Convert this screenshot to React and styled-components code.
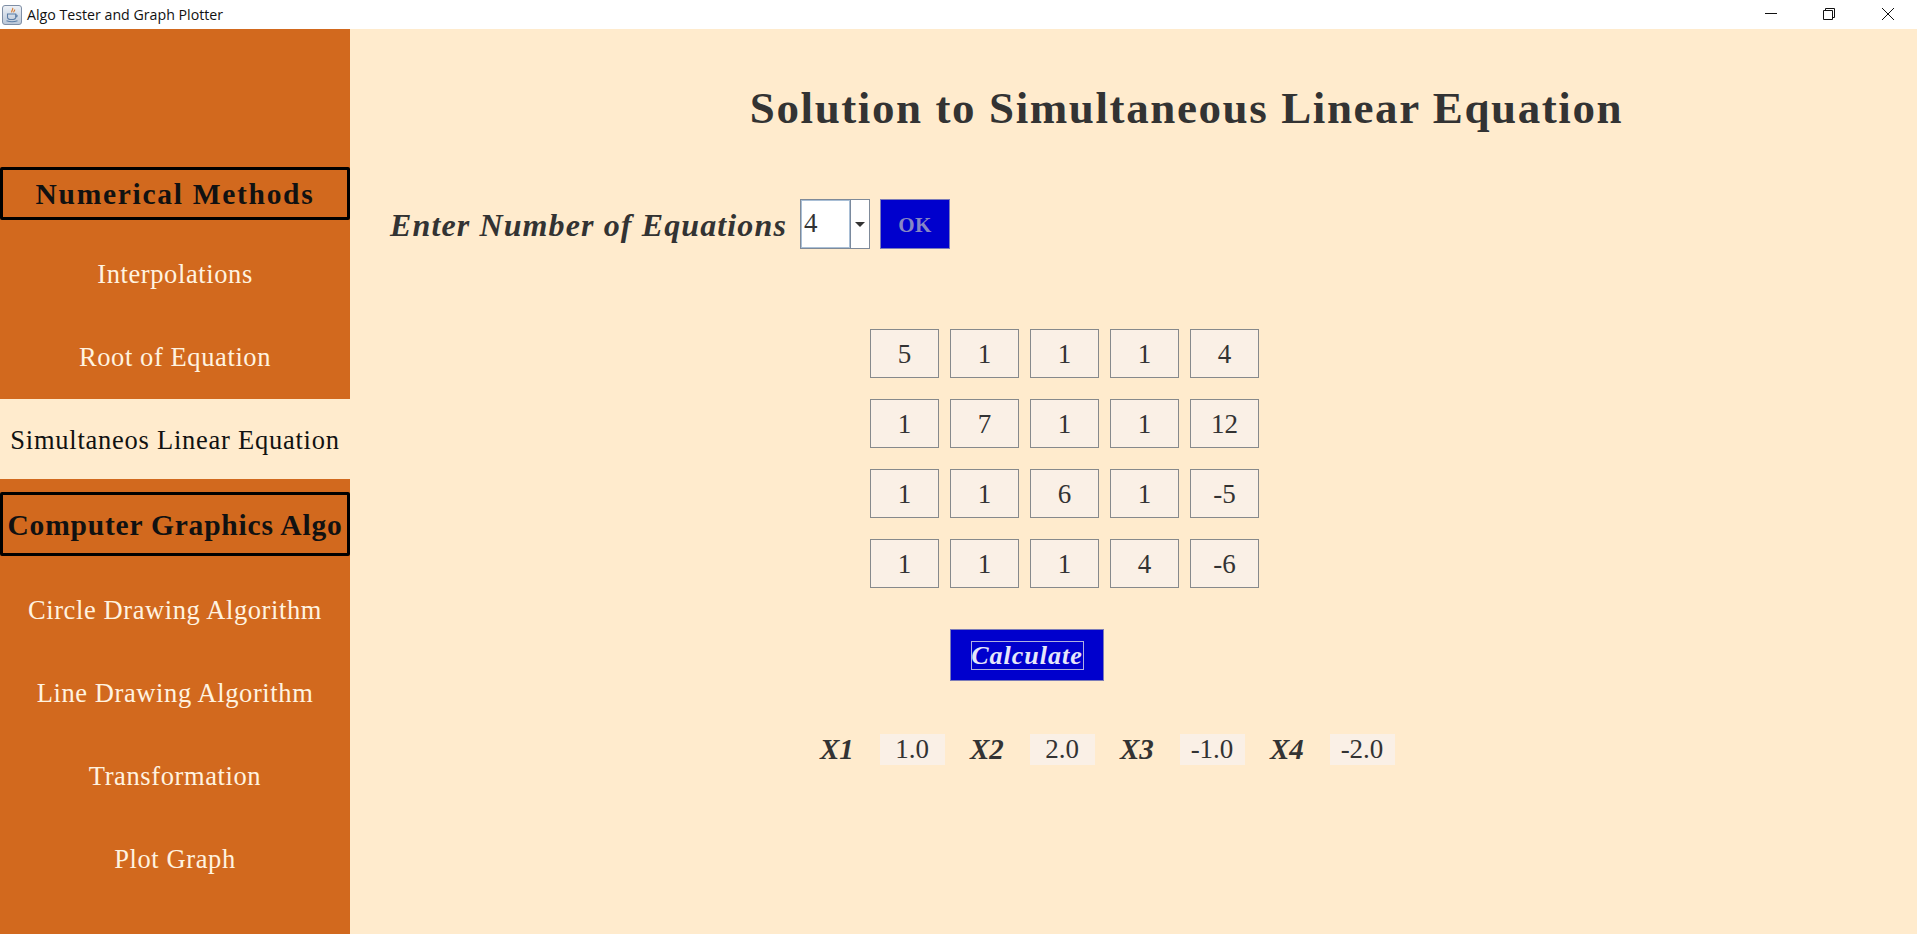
import React from 'react';
import styled, { createGlobalStyle } from 'styled-components';

const serif = `"Liberation Serif", "Times New Roman", serif`;

const GlobalStyle = createGlobalStyle`
  html, body {
    margin: 0;
    padding: 0;
    height: 100%;
    overflow: hidden;
    background: #FFEBCD;
  }
  * {
    box-sizing: border-box;
  }
`;

const Window = styled.div`
  width: 1917px;
  height: 934px;
  display: flex;
  flex-direction: column;
  overflow: hidden;
`;

const TitleBar = styled.div`
  height: 29px;
  flex: none;
  background: #fff;
  display: flex;
  align-items: center;
  padding-left: 2px;
`;

const AppName = styled.span`
  margin-left: 5px;
  font: 14.2px "Open Sans", "Noto Sans", sans-serif;
  color: #111;
  white-space: nowrap;
`;

const WindowButtons = styled.div`
  margin-left: auto;
  display: flex;
  height: 100%;
  margin-right: 22px;
  gap: 46px;
  align-items: flex-start;
  padding-top: 7px;
`;

const Body = styled.div`
  flex: 1;
  display: flex;
  min-height: 0;
`;

const Sidebar = styled.nav`
  width: 350px;
  flex: none;
  background: #D2691E;
  padding-top: 138px;
  display: flex;
  flex-direction: column;
`;

const SectionHead = styled.div`
  height: ${p => p.$height}px;
  margin-bottom: ${p => p.$after}px;
  padding-top: 2px;
  border: 3px solid #000;
  border-radius: 2px;
  display: flex;
  align-items: center;
  justify-content: center;
  font: bold 29.5px ${serif};
  letter-spacing: ${p => p.$spacing}px;
  color: #111;
  white-space: nowrap;
`;

const NavItem = styled.div`
  height: ${p => (p.$active ? 80 : 83)}px;
  margin-bottom: ${p => (p.$active ? 13 : 0)}px;
  padding-bottom: ${p => p.$lift || 0}px;
  padding-top: ${p => (p.$active ? 2 : 1)}px;
  display: flex;
  align-items: center;
  justify-content: center;
  font: 26.5px ${serif};
  letter-spacing: ${p => (p.$active ? 0.75 : 0.6)}px;
  white-space: nowrap;
  background: ${p => (p.$active ? '#FFEBCD' : 'transparent')};
  color: ${p => (p.$active ? '#111' : '#FFF3E0')};
`;

const Main = styled.main`
  flex: 1;
  padding-top: 54px;
  color: #333;
  font-family: ${serif};
`;

const Title = styled.h1`
  margin: 0 0 0 399px;
  width: 875px;
  height: 50px;
  text-align: center;
  font: bold 45px/50px ${serif};
  letter-spacing: 1.6px;
  color: #333;
  white-space: nowrap;
`;

const EquationRow = styled.div`
  margin: 66px 0 0 40px;
  display: flex;
  height: 50px;
`;

const RowLabel = styled.label`
  width: 410px;
  font: italic bold 32px/52px ${serif};
  letter-spacing: 1.12px;
  white-space: nowrap;
`;

const Combo = styled.div`
  width: 70px;
  height: 50px;
  display: flex;
  background: #fff;
  border: 1px solid #7f8a99;
`;

const ComboValue = styled.div`
  width: 50px;
  border-right: 1px solid #7a8a9e;
  box-shadow: inset 0 0 0 1px #a9bfd6;
  padding-left: 3px;
  font: 27px/47px ${serif};
  color: #333;
`;

const ComboArrow = styled.div`
  flex: 1;
  display: flex;
  align-items: center;
  justify-content: center;
  &::after {
    content: "";
    border-left: 5px solid transparent;
    border-right: 5px solid transparent;
    border-top: 5px solid #333;
  }
`;

const OkButton = styled.button`
  margin-left: 10px;
  width: 70px;
  height: 50px;
  padding: 2px 0 0;
  background: #0000CD;
  border: 1px solid #7c7cb8;
  color: #8787c4;
  font: bold 21px ${serif};
  letter-spacing: 0.5px;
`;

const MatrixGrid = styled.div`
  margin: 80px 0 0 520px;
  display: grid;
  grid-template-columns: repeat(5, 69px);
  grid-auto-rows: 49px;
  column-gap: 11px;
  row-gap: 21px;
`;

const Cell = styled.div`
  background: #FAF0E6;
  border: 1px solid #86898c;
  padding-top: 1px;
  display: flex;
  align-items: center;
  justify-content: center;
  font: 27px ${serif};
  color: #333;
`;

const CalcButton = styled.button`
  margin: 41px 0 0 600px;
  width: 154px;
  height: 52px;
  padding: 0;
  background: #0000CD;
  border: 1px solid #7c7cb8;
  display: flex;
  align-items: center;
  justify-content: center;
`;

const CalcFocus = styled.span`
  width: 113px;
  height: 29px;
  padding-top: 2px;
  border: 1px solid #b0b0e0;
  display: flex;
  align-items: center;
  justify-content: center;
  font: italic bold 26px ${serif};
  letter-spacing: 1px;
  color: #e6e6fa;
`;

const Results = styled.div`
  margin: 52px 0 0 470px;
  display: flex;
`;

const ResultPair = styled.div`
  width: 150px;
  display: flex;
  align-items: center;
`;

const ResultName = styled.span`
  width: 60px;
  font: italic bold 29px ${serif};
  color: #333;
`;

const ResultValue = styled.span`
  width: 65px;
  height: 31px;
  padding-right: 1px;
  background: #FAF0E6;
  display: flex;
  align-items: center;
  justify-content: center;
  font: 27px ${serif};
  color: #333;
`;

const JavaIcon = () => (
  <svg width="20" height="20" viewBox="0 0 20 20">
    <defs>
      <linearGradient id="javaBg" x1="0" y1="0" x2="0" y2="1">
        <stop offset="0" stopColor="#eef2f7" />
        <stop offset="1" stopColor="#b9c6d8" />
      </linearGradient>
    </defs>
    <rect x="0.5" y="0.5" width="19" height="19" rx="2.5" fill="url(#javaBg)" stroke="#7f8fa6" />
    <path d="M10.5 3c1.5 1.6-1.8 2.6-.6 4.4M12.6 4.5c.7 1-1.5 1.7-.7 2.9" fill="none" stroke="#d9782a" strokeWidth="1.1" />
    <path d="M5.5 9h8.2v3.2c0 1.5-1.4 2.3-4.1 2.3s-4.1-.8-4.1-2.3zM13.7 9.8c2 0 2 2.3-.3 2.4" fill="none" stroke="#5d7ea6" strokeWidth="1.1" />
    <path d="M4.5 15.8c3 1 8 1 11 0" fill="none" stroke="#5d7ea6" strokeWidth="1.1" />
  </svg>
);

const MinimizeIcon = () => (
  <svg width="12" height="14" viewBox="0 0 12 14">
    <path d="M0 6.5h12" stroke="#111" />
  </svg>
);

const RestoreIcon = () => (
  <svg width="12" height="14" viewBox="0 0 12 14">
    <path d="M.5 3.5h9v9h-9zM2.5 3.5v-2h9v9h-2" fill="none" stroke="#111" />
  </svg>
);

const CloseIcon = () => (
  <svg width="14" height="14" viewBox="0 0 14 14">
    <path d="M1 1l12 12M13 1L1 13" stroke="#111" />
  </svg>
);

const matrix = [
  ['5', '1', '1', '1', '4'],
  ['1', '7', '1', '1', '12'],
  ['1', '1', '6', '1', '-5'],
  ['1', '1', '1', '4', '-6'],
];

const results = [
  ['X1', '1.0'],
  ['X2', '2.0'],
  ['X3', '-1.0'],
  ['X4', '-2.0'],
];

export default function App() {
  return (
    <Window>
      <GlobalStyle />
      <TitleBar>
        <JavaIcon />
        <AppName>Algo Tester and Graph Plotter</AppName>
        <WindowButtons>
          <MinimizeIcon />
          <RestoreIcon />
          <CloseIcon />
        </WindowButtons>
      </TitleBar>
      <Body>
        <Sidebar>
          <SectionHead $height={53} $after={13} $spacing={1.7}>Numerical Methods</SectionHead>
          <NavItem $lift={1}>Interpolations</NavItem>
          <NavItem $lift={1}>Root of Equation</NavItem>
          <NavItem $active>Simultaneos Linear Equation</NavItem>
          <SectionHead $height={64} $after={12} $spacing={0.8}>Computer Graphics Algo</SectionHead>
          <NavItem>Circle Drawing Algorithm</NavItem>
          <NavItem>Line Drawing Algorithm</NavItem>
          <NavItem>Transformation</NavItem>
          <NavItem>Plot Graph</NavItem>
        </Sidebar>
        <Main>
          <Title>Solution to Simultaneous Linear Equation</Title>
          <EquationRow>
            <RowLabel>Enter Number of Equations</RowLabel>
            <Combo>
              <ComboValue>4</ComboValue>
              <ComboArrow />
            </Combo>
            <OkButton>OK</OkButton>
          </EquationRow>
          <MatrixGrid>
            {matrix.flat().map((v, i) => (
              <Cell key={i}>{v}</Cell>
            ))}
          </MatrixGrid>
          <CalcButton>
            <CalcFocus>Calculate</CalcFocus>
          </CalcButton>
          <Results>
            {results.map(([name, value]) => (
              <ResultPair key={name}>
                <ResultName>{name}</ResultName>
                <ResultValue>{value}</ResultValue>
              </ResultPair>
            ))}
          </Results>
        </Main>
      </Body>
    </Window>
  );
}
